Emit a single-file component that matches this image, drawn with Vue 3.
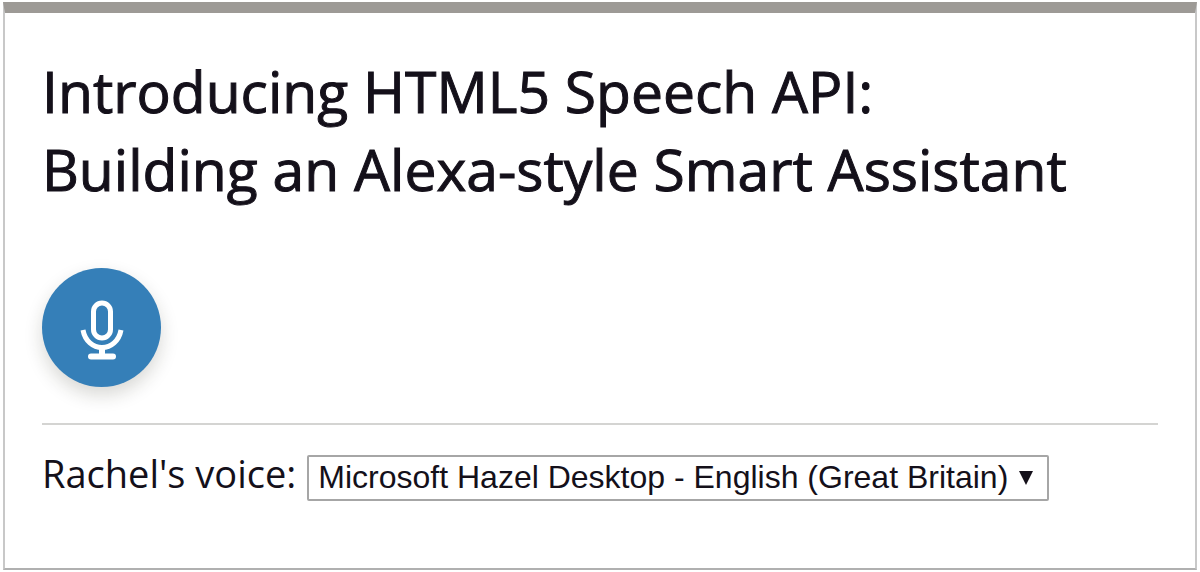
<script setup>
import { ref } from 'vue'

const voice = ref('hazel')
const voices = [{ id: 'hazel', name: 'Microsoft Hazel Desktop - English (Great Britain)' }]
</script>

<template>
  <main class="card">
    <h1>Introducing HTML5 Speech API:<br />Building an Alexa-style Smart Assistant</h1>
    <button class="mic" type="button" aria-label="Speak">
      <svg viewBox="0 0 44 60" fill="none" stroke="#fff" stroke-width="5">
        <rect x="13.500" y="3" width="17" height="35" rx="8.500" />
        <path d="M3 30C5 41 13 47.500 22 47.500S39 41 41 30" />
        <path d="M22 47v9" stroke-width="6" />
        <path d="M11 56.500h22" stroke-width="6" stroke-linecap="round" />
      </svg>
    </button>
    <div class="voice">
      <label for="voice">Rachel's voice:</label>
      <span class="picker">
        <select id="voice" v-model="voice">
          <option v-for="v in voices" :key="v.id" :value="v.id">{{ v.name }}</option>
        </select>
        <svg class="arrow" viewBox="0 0 14 14"><path d="M0 0h14L7 14z" fill="#14101a" /></svg>
      </span>
    </div>
  </main>
</template>

<style>
body {
  background: #fff;
}
</style>

<style scoped>
.card {
  box-sizing: border-box;
  min-height: calc(100vh - 4px);
  margin: 2px 3px;
  padding: 39px 37px;
  border: 2px solid #c8c8c8;
  border-top: 11px solid #9d9a96;
  border-bottom-color: #b0b0b0;
  font-family: "Open Sans", sans-serif;
  color: #14101a;
}
h1 {
  margin: 0 0 60px;
  font-size: 57px;
  line-height: 78px;
  font-weight: 400;
  -webkit-text-stroke: 1px #14101a;
}
.mic {
  display: flex;
  align-items: center;
  justify-content: center;
  width: 119px;
  height: 119px;
  padding: 4px 0 0;
  border: 0;
  border-radius: 50%;
  background: #357fb8;
  box-shadow: 0 8px 18px rgba(40, 40, 20, 0.18);
}
.mic svg {
  width: 44px;
  height: 60px;
}
.voice {
  display: flex;
  align-items: baseline;
  gap: 11px;
  margin-top: 36px;
  padding-top: 22px;
  border-top: 2px solid #d4d4d2;
  font-size: 38px;
  line-height: 52px;
}
.picker {
  position: relative;
}
select {
  display: block;
  appearance: none;
  height: 46px;
  padding: 0 39px 2px 9px;
  border: 2px solid #a6a6a6;
  border-radius: 2px;
  background: #fff;
  color: #14101a;
  font-family: "Liberation Sans", sans-serif;
  font-size: 32px;
}
.arrow {
  position: absolute;
  top: 16px;
  right: 16px;
  width: 14px;
  height: 14px;
  pointer-events: none;
}
</style>
